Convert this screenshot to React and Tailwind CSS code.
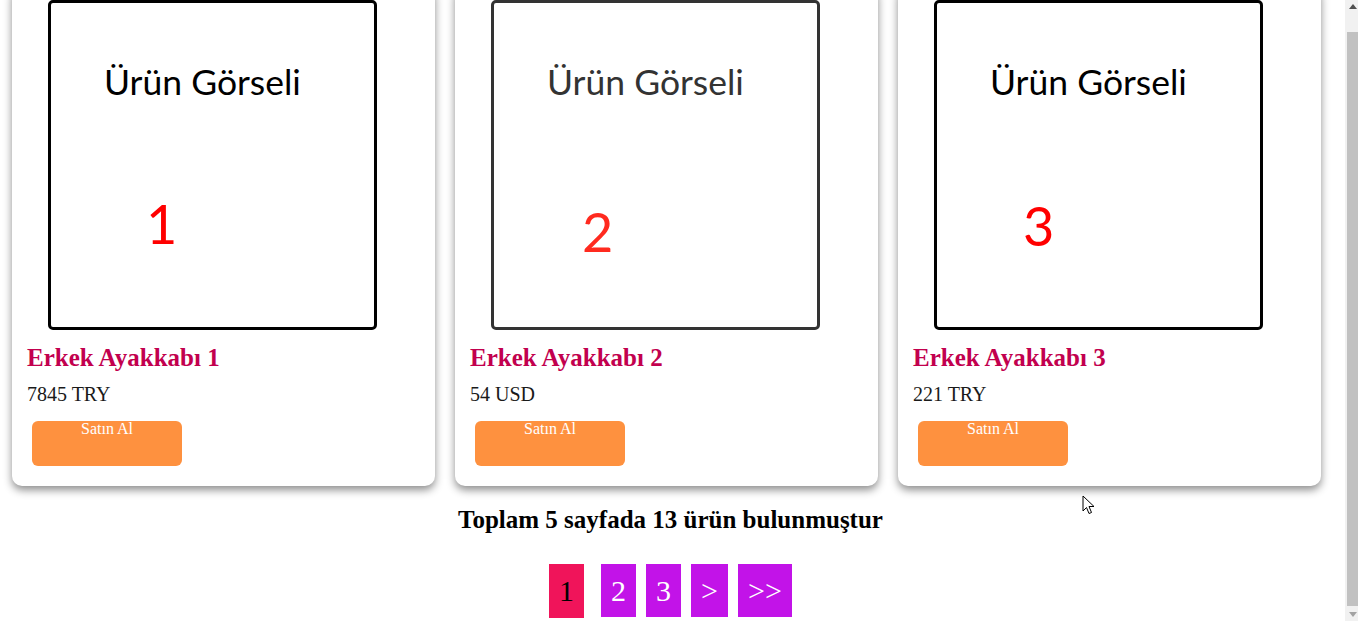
const products = [
  {
    name: 'Erkek Ayakkabı 1',
    price: '7845 TRY',
    digit: '1',
    frame: 'border-black text-black',
    digitPos: 'mt-[88px] ml-[42px] text-[#ff0000]',
  },
  {
    name: 'Erkek Ayakkabı 2',
    price: '54 USD',
    digit: '2',
    frame: 'border-[#333333] text-[#333333]',
    digitPos: 'mt-[96px] ml-[35px] text-[#ff2a1f]',
  },
  {
    name: 'Erkek Ayakkabı 3',
    price: '221 TRY',
    digit: '3',
    frame: 'border-black text-black',
    digitPos: 'mt-[90px] ml-[33px] text-[#ff0000]',
  },
];

const pages = [
  { label: '1', active: true },
  { label: '2' },
  { label: '3' },
  { label: '>' },
  { label: '>>' },
];

function ProductImage({ p }) {
  return (
    <div className={`ml-[21px] w-[329px] h-[330px] border-[3px] rounded-[5px] bg-white flex flex-col pl-[53px] pt-[58px] font-['Lato',sans-serif] ${p.frame}`}>
      <span className="text-[35.5px] leading-[42px]">Ürün Görseli</span>
      <span className={`text-[54px] leading-[65px] ${p.digitPos}`}>{p.digit}</span>
    </div>
  );
}

function ProductCard({ p }) {
  return (
    <div className="w-[423px] bg-white rounded-[10px] shadow-[0_4px_8px_rgba(0,0,0,0.45)] px-[15px] pt-[15px] pb-[20px] flex flex-col">
      <ProductImage p={p} />
      <h2 className="mt-[13px] text-[25px] leading-[29px] font-bold text-[#c2004e]">{p.name}</h2>
      <p className="mt-[11px] text-[20px] leading-[23px] text-[#1a1a1a]">{p.price}</p>
      <button className="mt-[15px] ml-[5px] w-[150px] h-[45px] rounded-[6px] bg-[#fe913f] text-white text-[16px] leading-4 flex justify-center items-start">
        Satın Al
      </button>
    </div>
  );
}

function Scrollbar() {
  return (
    <div className="w-[13px] h-full bg-[#f1f1f1] flex flex-col">
      <div className="h-[32px] flex justify-center pt-[4px] pl-[2px]">
        <svg width="8" height="5" viewBox="0 0 8 5"><path d="M0 5 L4 0 L8 5 Z" fill="#505050" /></svg>
      </div>
      <div className="ml-[2px] h-[574px] bg-[#c1c1c1]" />
      <div className="flex justify-center pt-[6px] pl-[2px]">
        <svg width="8" height="5" viewBox="0 0 8 5"><path d="M0 0 L8 0 L4 5 Z" fill="#a3a3a3" /></svg>
      </div>
    </div>
  );
}

export default function App() {
  return (
    <div className="flex h-[621px] w-full overflow-hidden bg-white font-['Liberation_Serif',serif] text-black">
      <main className="relative flex-1 pr-[4px]">
        <div className="-mt-[15px] pl-[12px] flex gap-[20px]">
          {products.map((p) => (
            <ProductCard key={p.name} p={p} />
          ))}
        </div>

        <h3 className="mt-[19px] text-center text-[25px] leading-[29px] font-bold">
          Toplam 5 sayfada 13 ürün bulunmuştur
        </h3>

        <div className="mt-[30px] flex justify-center items-start gap-[10px]">
          {pages.map((pg) => (
            <span
              key={pg.label}
              className={
                pg.active
                  ? 'mr-[7px] px-[10px] py-[10px] h-[54px] text-[30px] leading-[33px] bg-[#f0145a] text-black'
                  : 'px-[10px] py-[10px] h-[53px] text-[30px] leading-[33px] bg-[#c213e8] text-white'
              }
            >
              {pg.label}
            </span>
          ))}
        </div>

        {/* mouse pointer */}
        <svg className="absolute left-[1082px] top-[495px]" width="13" height="20" viewBox="0 0 13 20">
          <path d="M1 1 L1 16 L4.5 12.5 L7 18.5 L9.5 17.5 L7 11.5 L12 11.5 Z" fill="#ffffff" stroke="#000000" strokeWidth="1" strokeLinejoin="round" />
        </svg>
      </main>
      <Scrollbar />
    </div>
  );
}
